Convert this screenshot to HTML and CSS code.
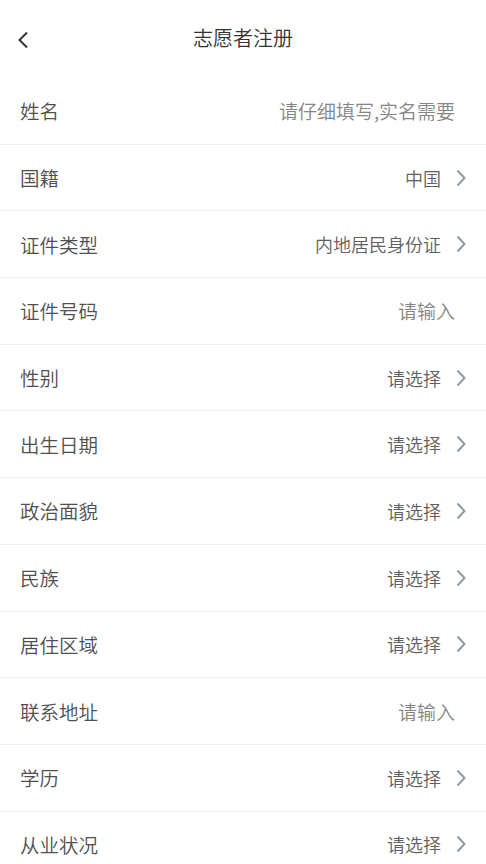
FILE: index.html
```html
<!doctype html>
<html>
  <head>
    <title>志愿者注册</title>
    <meta name="viewport" content="width=device-width, initial-scale=1.0" />
    <link rel="stylesheet" href="styles.css">
  </head>
  <body>
    <div class="header">
      <svg class="back" viewBox="0 0 12 18">
        <path d="M10 1.5 L2.5 9 L10 16.5" fill="none" stroke="#333" stroke-width="2" />
      </svg>
      <h1>志愿者注册</h1>
    </div>
    <div class="form">
      <div class="row">
        <span class="label">姓名</span>
        <span class="hint input">请仔细填写,实名需要</span>
      </div>
      <div class="row">
        <span class="label">国籍</span>
        <span class="value">中国</span>
        <svg class="arrow" viewBox="0 0 10 18"><path d="M1.5 1.5 L8.5 9 L1.5 16.5" /></svg>
      </div>
      <div class="row">
        <span class="label">证件类型</span>
        <span class="value">内地居民身份证</span>
        <svg class="arrow" viewBox="0 0 10 18"><path d="M1.5 1.5 L8.5 9 L1.5 16.5" /></svg>
      </div>
      <div class="row">
        <span class="label">证件号码</span>
        <span class="hint input">请输入</span>
      </div>
      <div class="row">
        <span class="label">性别</span>
        <span class="value">请选择</span>
        <svg class="arrow" viewBox="0 0 10 18"><path d="M1.5 1.5 L8.5 9 L1.5 16.5" /></svg>
      </div>
      <div class="row">
        <span class="label">出生日期</span>
        <span class="value">请选择</span>
        <svg class="arrow" viewBox="0 0 10 18"><path d="M1.5 1.5 L8.5 9 L1.5 16.5" /></svg>
      </div>
      <div class="row">
        <span class="label">政治面貌</span>
        <span class="value">请选择</span>
        <svg class="arrow" viewBox="0 0 10 18"><path d="M1.5 1.5 L8.5 9 L1.5 16.5" /></svg>
      </div>
      <div class="row">
        <span class="label">民族</span>
        <span class="value">请选择</span>
        <svg class="arrow" viewBox="0 0 10 18"><path d="M1.5 1.5 L8.5 9 L1.5 16.5" /></svg>
      </div>
      <div class="row">
        <span class="label">居住区域</span>
        <span class="value">请选择</span>
        <svg class="arrow" viewBox="0 0 10 18"><path d="M1.5 1.5 L8.5 9 L1.5 16.5" /></svg>
      </div>
      <div class="row">
        <span class="label">联系地址</span>
        <span class="hint input">请输入</span>
      </div>
      <div class="row">
        <span class="label">学历</span>
        <span class="value">请选择</span>
        <svg class="arrow" viewBox="0 0 10 18"><path d="M1.5 1.5 L8.5 9 L1.5 16.5" /></svg>
      </div>
      <div class="row">
        <span class="label">从业状况</span>
        <span class="value">请选择</span>
        <svg class="arrow" viewBox="0 0 10 18"><path d="M1.5 1.5 L8.5 9 L1.5 16.5" /></svg>
      </div>
    </div>
  </body>
</html>
```

FILE: styles.css
```css
body {
  font-family: "Noto Sans CJK SC", "Noto Sans", sans-serif;
  font-weight: 350;
  margin: 0;
  background: #fff;
  overflow: hidden;
}
.header {
  position: relative;
  height: 77px;
  display: flex;
  align-items: center;
  justify-content: center;
}
.header h1 {
  margin: 0;
  margin-top: -2px;
  font-size: 20px;
  font-weight: 350;
  color: #333;
}
.back {
  position: absolute;
  left: 17px;
  top: 31px;
  width: 12px;
  height: 18px;
}
.row {
  height: 66.7px;
  box-sizing: border-box;
  display: flex;
  align-items: center;
  padding: 0 20px;
  border-top: 1px solid #efefef;
}
.row:first-child {
  border-top: none;
}
.label {
  flex: 1;
  font-size: 19.5px;
  color: #4f4f4f;
}
.value {
  font-size: 18px;
  color: #606060;
}
.hint {
  font-size: 19px;
  color: #858585;
}
.input {
  margin-right: 11px;
}
.arrow {
  width: 10px;
  height: 18px;
  margin-left: 15px;
}
.arrow path {
  fill: none;
  stroke: #8b9ba7;
  stroke-width: 2;
}
```
